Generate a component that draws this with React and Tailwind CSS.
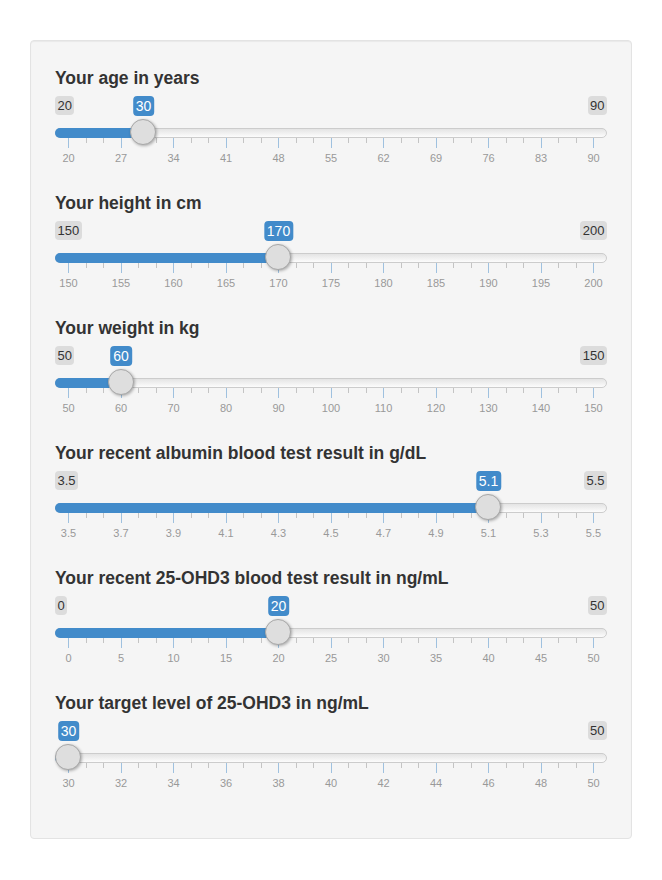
import React from "react";

const sliders = [
  { label: "Your age in years", min: 20, max: 90, value: 30, dec: 0 },
  { label: "Your height in cm", min: 150, max: 200, value: 170, dec: 0 },
  { label: "Your weight in kg", min: 50, max: 150, value: 60, dec: 0 },
  { label: "Your recent albumin blood test result in g/dL", min: 3.5, max: 5.5, value: 5.1, dec: 1 },
  { label: "Your recent 25-OHD3 blood test result in ng/mL", min: 0, max: 50, value: 20, dec: 0 },
  { label: "Your target level of 25-OHD3 in ng/mL", min: 30, max: 50, value: 30, dec: 0 },
];

// handle centre runs from 13px to 538px inside the 552px widget
const START = 13;
const SPAN = 525;

const Slider = ({ label, min, max, value, dec }) => {
  const pct = (value - min) / (max - min);
  const x = START + SPAN * pct;
  const fmt = (v) => v.toFixed(dec);
  const singleW = fmt(value).length * 8 + 7;
  const hideMin = x - singleW / 2 < 26;

  const ticks = Array.from({ length: 31 }, (_, i) => i % 3 === 0);
  const grid = Array.from({ length: 11 }, (_, i) => min + ((max - min) * i) / 10);

  return (
    <div className="h-[125px]">
      <div className="text-[17.5px] leading-[20px] font-bold text-[#333]">{label}</div>
      <div className="mt-[8px] flex flex-col">
        {/* min / max labels with the value bubble over them */}
        <div className="relative flex h-[20px] justify-between">
          <span
            className={
              hideMin
                ? "invisible h-[19px] leading-[19px] px-[2.5px] rounded-[4px] bg-[#dcdcdc] text-[13px] text-[#333]"
                : "h-[19px] leading-[19px] px-[2.5px] rounded-[4px] bg-[#dcdcdc] text-[13px] text-[#333]"
            }
          >
            {fmt(min)}
          </span>
          <span className="h-[19px] leading-[19px] px-[2.5px] rounded-[4px] bg-[#dcdcdc] text-[13px] text-[#333]">
            {fmt(max)}
          </span>
          <span
            className="absolute top-0 h-[20px] leading-[20px] px-[3px] -translate-x-1/2 rounded-[4px] bg-[#428bca] text-[14px] text-white"
            style={{ left: x + 0.5 }}
          >
            {fmt(value)}
          </span>
        </div>

        {/* track, bar and handle */}
        <div className="relative mt-[12px] h-[10px]">
          <div className="h-full rounded-full border border-[#cccccc] bg-gradient-to-b from-[#e4e4e4] to-[#fcfcfc]" />
          <div
            className="absolute left-0 top-0 h-full rounded-l-full bg-[#428bca]"
            style={{ width: x }}
          />
          <div
            className="absolute top-[-9px] w-[26px] h-[26px] rounded-full border border-[#a8a8a8] bg-[#dedede] shadow-[1px_1px_3px_rgba(0,0,0,0.3)]"
            style={{ left: x - 13 }}
          />
        </div>

        {/* grid ticks */}
        <div className="flex h-[10px] items-start justify-between px-[13px]">
          {ticks.map((big, i) =>
            big ? (
              <div key={i} className="w-px h-[10px] bg-[#9fc1df]" />
            ) : (
              <div key={i} className="w-px h-[5px] bg-[#c4c4c4]" />
            )
          )}
        </div>

        {/* grid numbers */}
        <div className="mt-[3px] flex justify-between px-[13px]">
          {grid.map((v, i) => (
            <div key={i} className="flex w-px justify-center">
              <span className="text-[11px] leading-[14px] text-[#999] whitespace-nowrap">
                {fmt(v)}
              </span>
            </div>
          ))}
        </div>
      </div>
    </div>
  );
};

const App = () => {
  return (
    <div className="min-h-screen bg-white pl-[30px] pt-[40px] font-['Liberation_Sans',Arial,sans-serif]">
      <div className="w-[602px] rounded-[4px] border border-[#e3e3e3] bg-[#f5f5f5] shadow-[inset_0_1px_1px_rgba(0,0,0,0.05)] px-6 pt-[27px] pb-[20px]">
        {sliders.map((s) => (
          <Slider key={s.label} {...s} />
        ))}
      </div>
    </div>
  );
};

export default App;
